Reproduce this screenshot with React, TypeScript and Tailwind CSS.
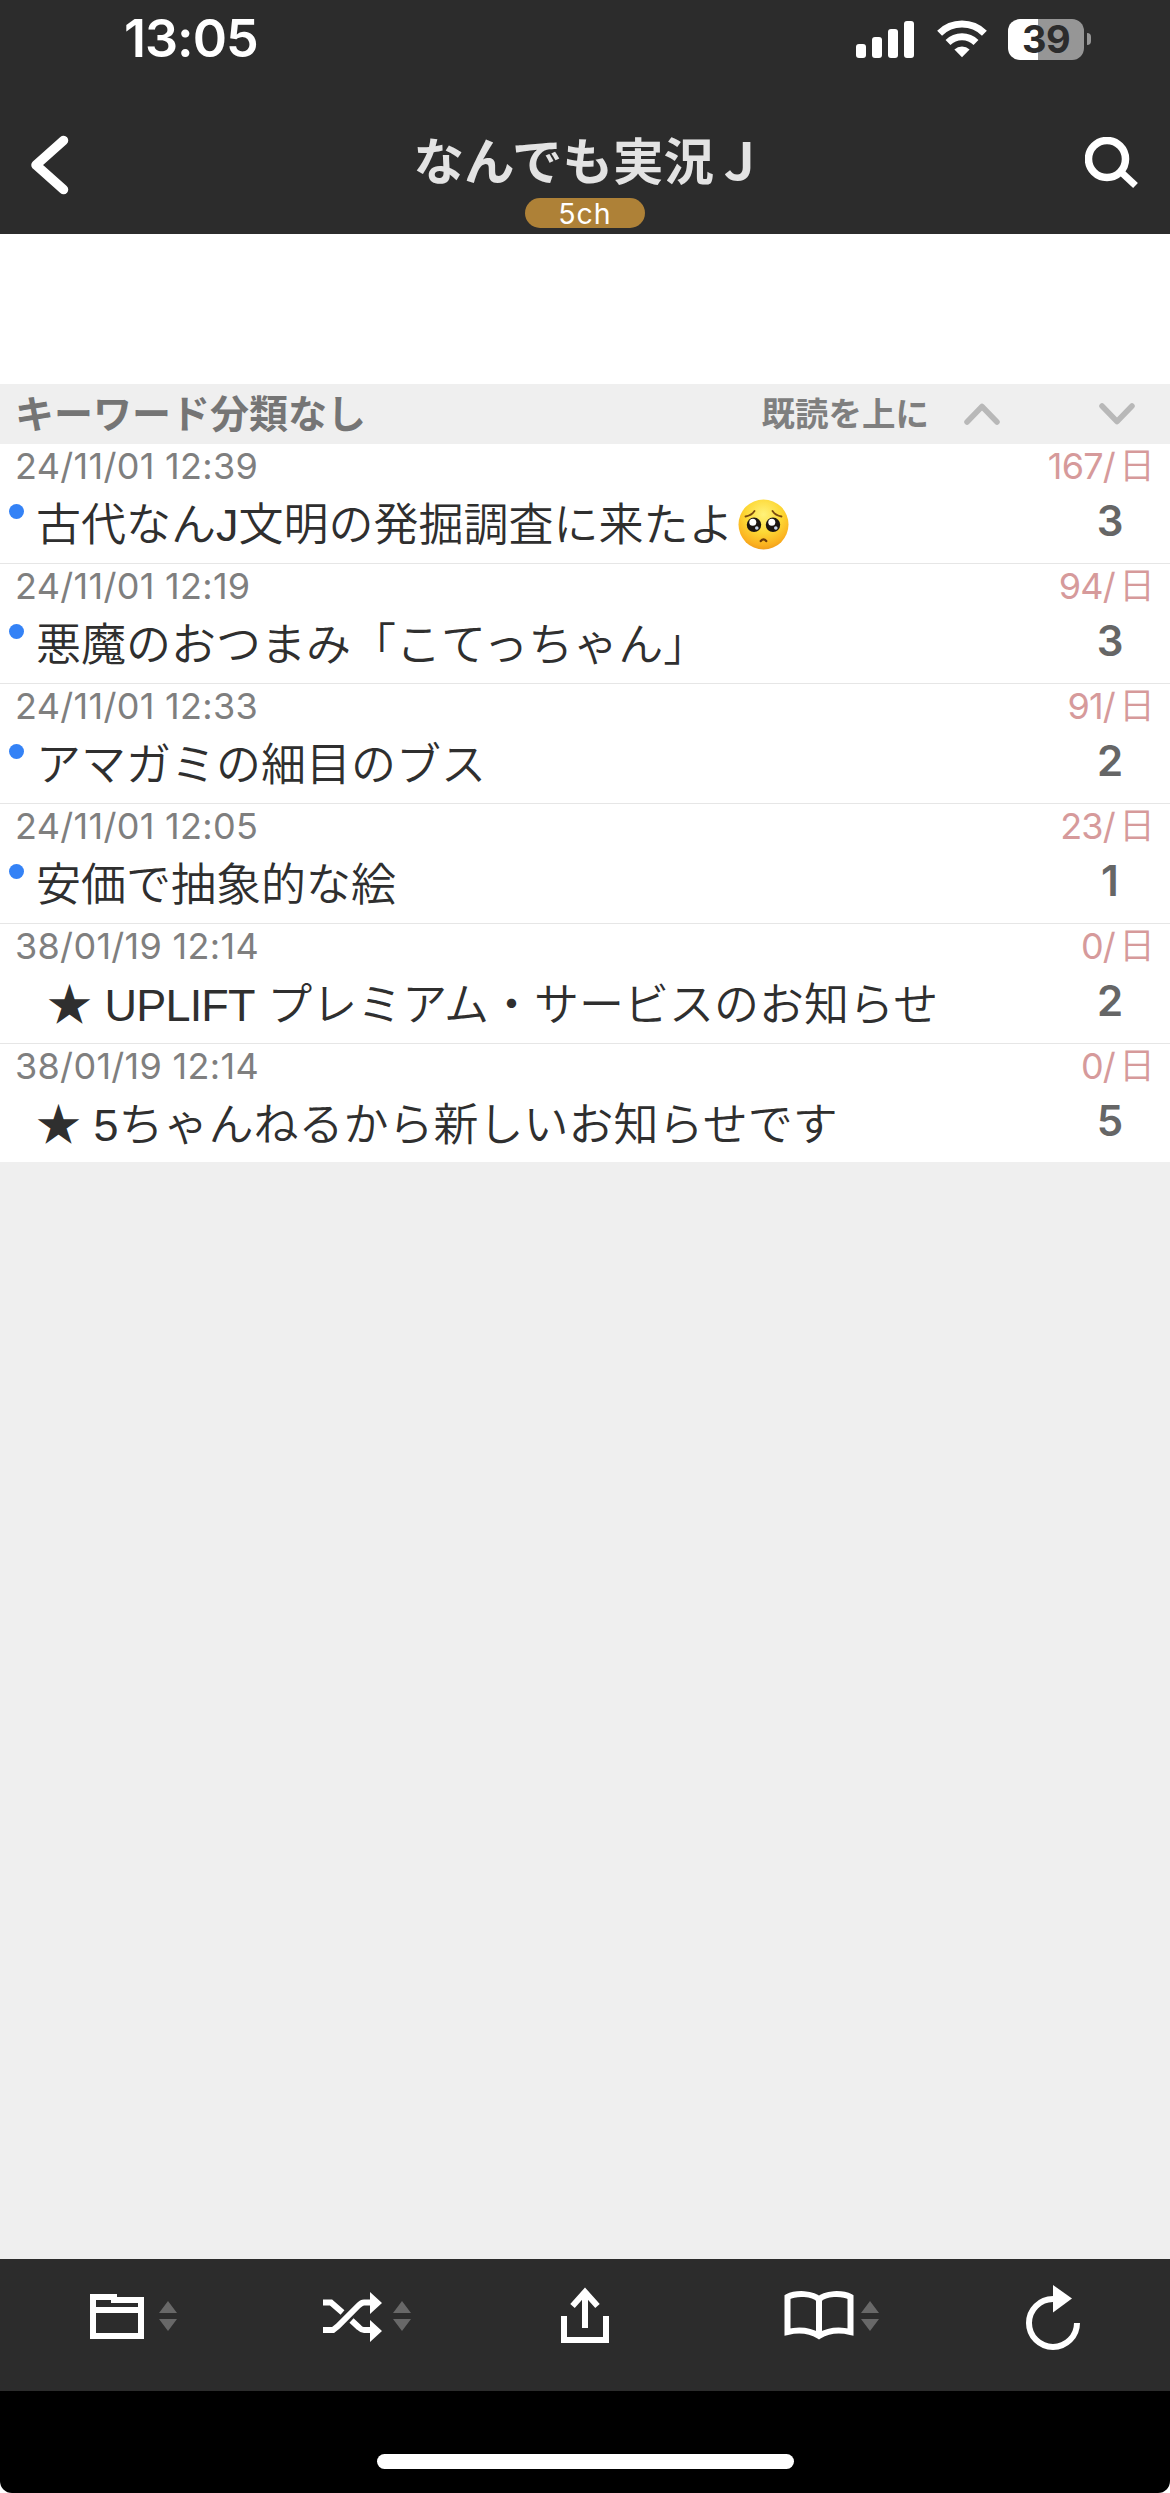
import React from "react";

interface Thread {
  date: string;
  title: string;
  perDay: number;
  count: number;
  unread: boolean;
  // latin word placed between the star and the title
  brand?: string;
  pleading?: boolean;
}

const threads: Thread[] = [
  { date: "24/11/01 12:39", title: "古代なんJ文明の発掘調査に来たよ", perDay: 167, count: 3, unread: true, pleading: true },
  { date: "24/11/01 12:19", title: "悪魔のおつまみ「こてっちゃん」", perDay: 94, count: 3, unread: true },
  { date: "24/11/01 12:33", title: "アマガミの細目のブス", perDay: 91, count: 2, unread: true },
  { date: "24/11/01 12:05", title: "安価で抽象的な絵", perDay: 23, count: 1, unread: true },
  { date: "38/01/19 12:14", title: " プレミアム・サービスのお知らせ", brand: "UPLIFT", perDay: 0, count: 2, unread: false },
  { date: "38/01/19 12:14", title: "★ 5ちゃんねるから新しいお知らせです", perDay: 0, count: 5, unread: false },
];

const SignalIcon = () => (
  <svg width="58" height="37" viewBox="0 0 58 37" fill="#fff">
    <rect x="0" y="23" width="10" height="14" rx="3" />
    <rect x="16" y="16" width="10" height="21" rx="3" />
    <rect x="32" y="8" width="10" height="29" rx="3" />
    <rect x="48" y="0" width="10" height="37" rx="3" />
  </svg>
);

const WifiIcon = () => (
  <svg width="50" height="38" viewBox="0 0 50 38" fill="none" stroke="#fff" strokeWidth="7">
    <path d="M2.6 13.2 A32 32 0 0 1 47.4 13.2" />
    <path d="M11 22.4 A20 20 0 0 1 39 22.4" />
    <path d="M17.4 29.4 A11.5 11.5 0 0 1 32.6 29.4 L25 37.3 Z" fill="#fff" stroke="none" />
  </svg>
);

const Battery = () => (
  <div className="flex items-center gap-[3px]">
    <div className="flex h-[41px] w-[76px] items-center justify-center rounded-[12px] bg-linear-to-r from-white from-39% to-[#969696] to-39% text-[38px] leading-[41px] font-bold tracking-[-0.5px] text-[#2c2c2c]">
      39
    </div>
    <div className="h-[12px] w-[4px] rounded-r-full bg-[#969696]" />
  </div>
);

const PleadingFace = () => (
  <svg width="51" height="51" viewBox="0 0 51 51" role="img" aria-label="🥺" className="shrink-0">
    <defs>
      <radialGradient id="face" cx="0.5" cy="0.3" r="0.72">
        <stop offset="0" stopColor="#fff27a" />
        <stop offset="0.5" stopColor="#fdd835" />
        <stop offset="0.85" stopColor="#fbb11f" />
        <stop offset="1" stopColor="#ee9a1c" />
      </radialGradient>
    </defs>
    <circle cx="25.5" cy="25.5" r="25" fill="url(#face)" />
    <path d="M7.5 17.5 Q13.5 16.5 16.5 12 M34.5 12 Q37.5 16.5 43.5 17.5" fill="none" stroke="#7a4a10" strokeWidth="1.8" strokeLinecap="round" />
    <circle cx="16" cy="25.8" r="7.2" fill="#1c1512" />
    <circle cx="35" cy="25.8" r="7.2" fill="#1c1512" />
    <circle cx="14.8" cy="23.2" r="3.5" fill="#fff" />
    <circle cx="33.8" cy="23.2" r="3.5" fill="#fff" />
    <circle cx="18.8" cy="29" r="1.8" fill="#c9d6ea" />
    <circle cx="37.8" cy="29" r="1.8" fill="#c9d6ea" />
    <path d="M22.8 42 Q25.5 38.8 28.2 42" fill="none" stroke="#6b3a0a" strokeWidth="2.4" strokeLinecap="round" />
  </svg>
);

const Header = () => (
  <header className="h-[234px] bg-[#2c2c2c]">
    <div className="flex h-[78px] items-center justify-between pr-[79px] pl-[124px]">
      <div className="text-[52px] leading-[78px] font-semibold tracking-[-1px] text-white">13:05</div>
      <div className="flex items-center">
        <SignalIcon />
        <div className="ml-[23px]">
          <WifiIcon />
        </div>
        <div className="ml-[21px]">
          <Battery />
        </div>
      </div>
    </div>
    <div className="grid h-[156px] grid-cols-[1fr_360px_1fr] pt-[50px]">
      <button className="ml-[30px] h-[76px] w-[40px]">
        <svg width="40" height="76" viewBox="0 0 40 76" fill="none" stroke="#fff" strokeWidth="9.5" strokeLinecap="round" strokeLinejoin="round">
          <path d="M33.5 12.5 L6 37 L33.5 61.5" />
        </svg>
      </button>
      <div className="flex flex-col items-center">
        <h1 className="h-[70px] pl-[8px] text-[50.5px] leading-[68px] font-bold whitespace-nowrap text-[#e3e3e3]">なんでも実況Ｊ</h1>
        <span className="h-[30px] w-[120px] rounded-full bg-[#ae8137] text-center text-[28.5px] leading-[32px] tracking-[1px] text-white">
          5ch
        </span>
      </div>
      <button className="mt-[9px] mr-[31px] h-[52px] w-[54px] justify-self-end">
        <svg width="54" height="52" viewBox="0 0 54 52" fill="none" stroke="#fff">
          <circle cx="22" cy="22" r="18.5" strokeWidth="7.5" />
          <path d="M36 35 L50.5 48.5" strokeWidth="7" />
        </svg>
      </button>
    </div>
  </header>
);

const SectionBar = () => (
  <div className="flex h-[60px] items-center bg-[#efefef] pr-[34px] pl-[15px] font-bold">
    <span className="flex-1 text-[39px] leading-[62px] text-[#757575]">キーワード分類なし</span>
    <span className="text-[33.5px] leading-[62px] text-[#7f7f7f]">既読を上に</span>
    <svg width="38" height="24" viewBox="0 0 38 24" className="ml-[34px]" fill="none" stroke="#b8b8b8" strokeWidth="5.5" strokeLinecap="round" strokeLinejoin="round">
      <path d="M4 20 L19 4.5 L34 20" />
    </svg>
    <svg width="38" height="24" viewBox="0 0 38 24" className="ml-[97px]" fill="none" stroke="#b8b8b8" strokeWidth="5.5" strokeLinecap="round" strokeLinejoin="round">
      <path d="M4 4 L19 19.5 L34 4" />
    </svg>
  </div>
);

const ThreadRow = ({ thread }: { thread: Thread }) => (
  <li className="h-[120px] border-b border-[#e6e6e6] bg-white">
    <div className="flex h-[46px] justify-between pr-[15px] pl-[15px] text-[36px] leading-[45px]">
      <span className="tracking-[0.3px] text-[#7f7f7f]">{thread.date}</span>
      <span className="flex text-[#d69a9b]">
        <span className="tracking-[-0.8px]">{thread.perDay}/</span>
        <span className="ml-[4px] font-[350]">日</span>
      </span>
    </div>
    <div className="flex h-[73px]">
      <div className="w-[36px] shrink-0 pt-[14px] pl-[9px]">
        {thread.unread && <div className="size-[15px] rounded-full bg-[#3482f6]" />}
      </div>
      <div className="flex flex-1 items-start font-['Liberation_Sans','Noto_Sans_CJK_JP',sans-serif] text-[45px] leading-[72px] font-[350] whitespace-pre text-[#2f2f2f]">
        {thread.brand && (
          <span className="pl-[11px]">
            ★ <span className="tracking-[-0.8px]">{thread.brand}</span>
          </span>
        )}
        <span>{thread.title}</span>
        {thread.pleading && (
          <div className="pt-[9px] pl-[4px]">
            <PleadingFace />
          </div>
        )}
      </div>
      <div className="w-[120px] text-center text-[42px] leading-[62px] font-semibold text-[#666]">{thread.count}</div>
    </div>
  </li>
);

const ToolItem = ({ children, sortable }: { children: React.ReactNode; sortable?: boolean }) => (
  <div className="grid grid-cols-[1fr_84px_1fr]">
    <button className="col-start-2 flex justify-center">{children}</button>
    {sortable && (
      <svg width="18" height="30" viewBox="0 0 18 30" fill="#686868" className="mt-[42px]">
        <path d="M0 12 L9 0 L18 12 Z M0 18 L9 30 L18 18 Z" />
      </svg>
    )}
  </div>
);

const Toolbar = () => (
  <nav className="grid h-[132px] grid-cols-5 bg-[#2c2c2c]">
    <ToolItem sortable>
      <svg width="54" height="45" viewBox="0 0 54 45" fill="#fff" fillRule="evenodd" className="mt-[35px]">
        <path d="M0 0 H27 V3 H54 V45 H0 Z M6 6 V13 H48 V9 H21 V6 Z M6 19 V39 H48 V19 Z" />
      </svg>
    </ToolItem>
    <ToolItem sortable>
      <svg width="60" height="50" viewBox="0 0 60 50" fill="none" stroke="#fff" strokeWidth="6" className="mt-[33px] ml-[3px]">
        <path d="M0 10.5 H8 L19.5 20.5" />
        <path d="M0 38 H10 L15 34 L35 14 Q38.5 10.5 41 10.5 H48" />
        <path d="M28.5 28.5 L36 35.5 Q38.5 38 41 38 H48" />
        <path d="M47 0 L59 11 L47 22 Z M47 28 L59 39 L47 50 Z" fill="#fff" stroke="none" />
      </svg>
    </ToolItem>
    <ToolItem>
      <svg width="48" height="56" viewBox="0 0 48 56" fill="none" stroke="#fff" strokeWidth="6" className="mt-[28px]">
        <path d="M3 29 V53 H45 V29" />
        <path d="M24 41 V6" />
        <path d="M11.5 19 L24 5 L36.5 19" />
      </svg>
    </ToolItem>
    <ToolItem sortable>
      <svg width="70" height="50" viewBox="0 0 70 50" fill="none" stroke="#fff" strokeWidth="6" className="mt-[32px]">
        <path d="M35 45 C26 39.5 14 38.5 3.5 41 V6 C12 1.5 29 2 35 8.5 C41 2 58 1.5 66.5 6 V41 C56 38.5 44 39.5 35 45 Z" />
        <path d="M35 8 V45" />
      </svg>
    </ToolItem>
    <ToolItem>
      <svg width="54" height="66" viewBox="0 0 54 66" fill="none" stroke="#fff" strokeWidth="6" className="mt-[26px]">
        <path d="M51 38 A24 24 0 1 1 27 14" />
        <path d="M27 0 L46 13.5 L27 27.5 Z" fill="#fff" stroke="none" />
      </svg>
    </ToolItem>
  </nav>
);

const App: React.FC = () => {
  return (
    <div className="flex h-[2493px] w-[1170px] flex-col overflow-hidden bg-white font-['Inter','Noto_Sans_CJK_JP',sans-serif]">
      <Header />
      <main className="flex-1 bg-[#efefef]">
        <div className="h-[150px] bg-white" />
        <SectionBar />
        <ul className="h-[718px] overflow-hidden">
          {threads.map((thread, i) => (
            <ThreadRow key={i} thread={thread} />
          ))}
        </ul>
      </main>
      <Toolbar />
      <footer className="flex h-[102px] justify-center rounded-b-[12px] bg-black pt-[63px]">
        <div className="h-[15px] w-[417px] rounded-full bg-white" />
      </footer>
    </div>
  );
};

export default App;
